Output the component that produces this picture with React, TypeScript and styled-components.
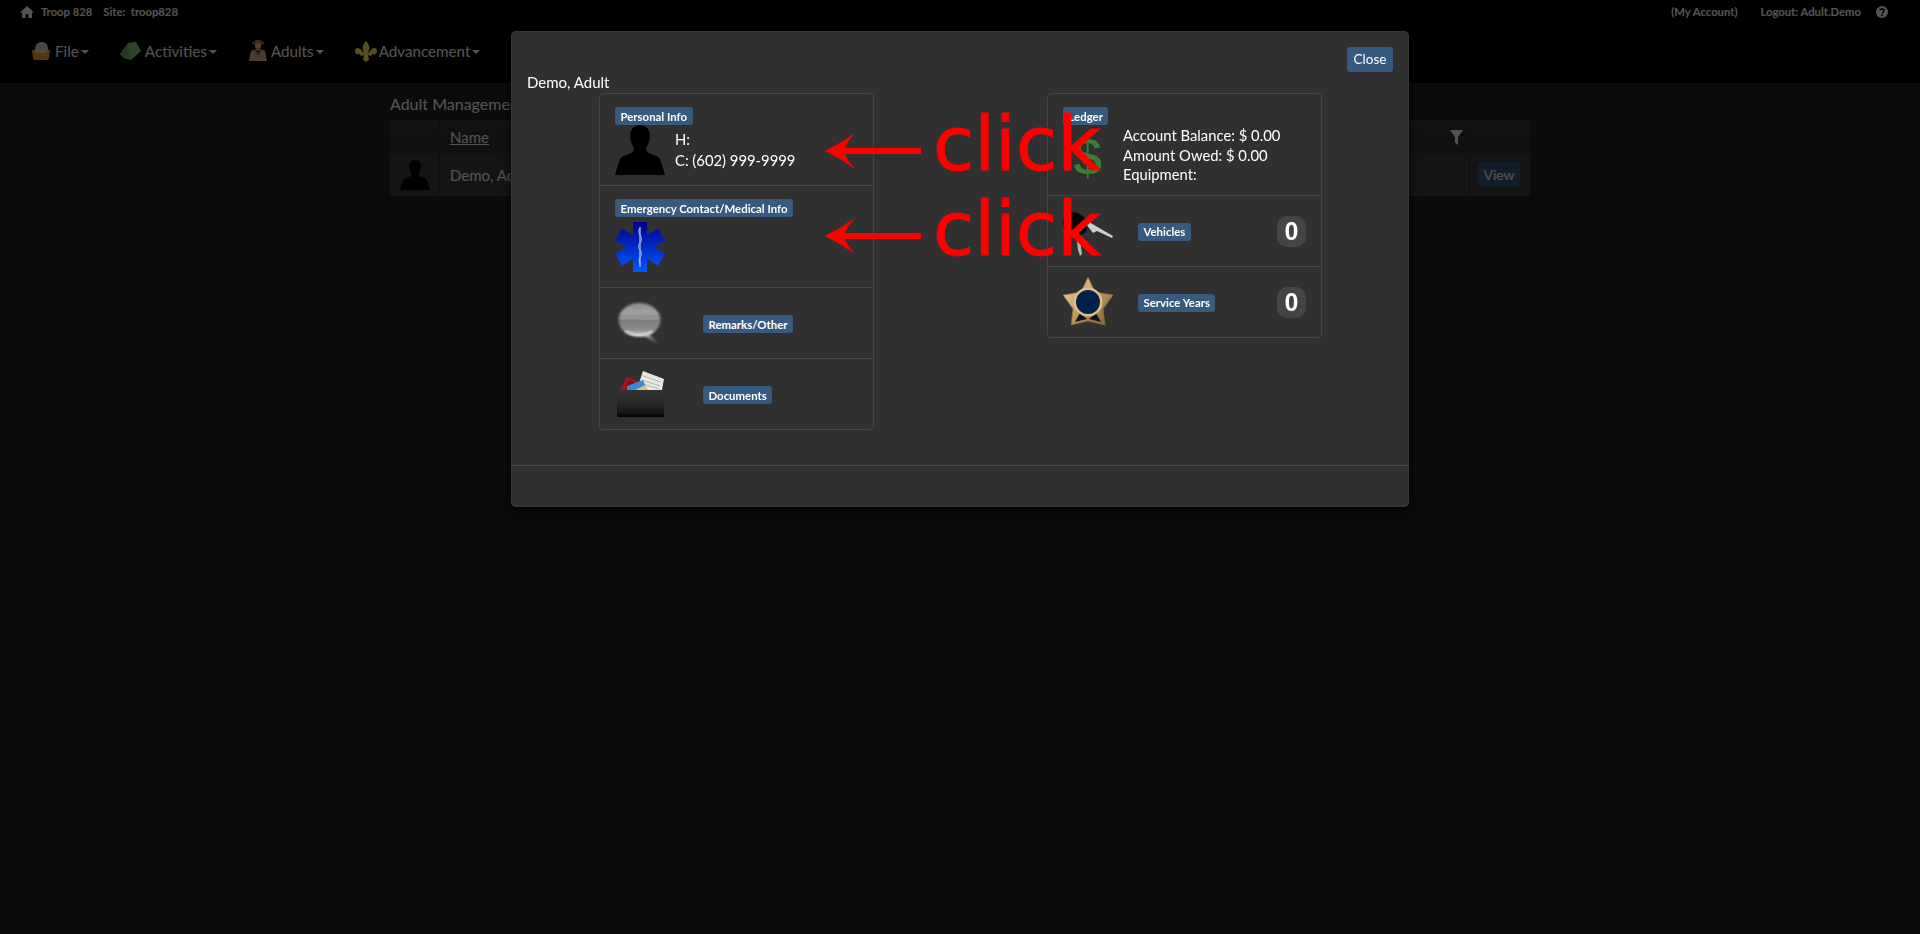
import React from "react";
import styled, { createGlobalStyle } from "styled-components";

const Global = createGlobalStyle`
  html, body { margin: 0; height: 100%; background: #222; overflow: hidden; }
  body { font-family: Lato, "Liberation Sans", sans-serif; font-size: 15px; line-height: 21px; color: #fff; }
  * { box-sizing: border-box; }
`;

const Header = styled.header`background: #000; height: 83px;`;
const TopBar = styled.div`
  height: 23px; display: flex; align-items: center; padding: 0 32px 0 20px;
  font-size: 11.25px; font-weight: 700; color: #fff;
`;
const TopText = styled.span<{ $ml?: number }>`margin-left: ${(p) => p.$ml ?? 0}px; white-space: nowrap;`;
const TopSpacer = styled.div`flex: 1;`;
const NavBar = styled.nav`display: flex; gap: 31px; padding: 16px 0 0 32px;`;
const NavItem = styled.div`display: flex; align-items: center; height: 24px; font-size: 15.2px; color: #fff;`;
const NavIcon = styled.svg<{ $mr: number }>`margin-right: ${(p) => p.$mr}px; flex: none;`;
const Caret = styled.span`
  width: 0; height: 0; margin-left: 2px; margin-top: 2px;
  border-left: 4px solid transparent; border-right: 4px solid transparent; border-top: 4px solid #fff;
`;

const Main = styled.main`width: 1140px; margin: 0 auto; padding-top: 10px;`;
const PageTitle = styled.div`font-size: 16px; line-height: 21px; margin-bottom: 6px;`;
const TableHead = styled.div`
  display: grid; grid-template-columns: 49px 1fr 61px; height: 33px;
  background: linear-gradient(#383838, #303030);
`;
const TableRow = styled.div`
  display: grid; grid-template-columns: 49px 1fr 61px; height: 43px; background: #3e3e3e;
`;
const AvatarCell = styled.div`display: flex; align-items: center; padding-left: 10px;`;
const NameCell = styled.div`
  display: flex; align-items: center; justify-content: space-between;
  padding: 2px 6px 0 10px; border-left: 1px solid #2a2a2a;
`;
const ActionCell = styled.div`display: flex; align-items: center; padding-left: 8px; border-left: 1px solid #2a2a2a;`;
const NameLink = styled.span`text-decoration: underline; font-size: 15px;`;
const ViewButton = styled.button`
  width: 42px; height: 25px; padding: 0; border: 0; border-radius: 3px; background: #375a7f;
  color: #fff; font: 14px Lato, sans-serif;
`;

const Backdrop = styled.div`position: fixed; inset: 0; background: rgba(0, 0, 0, 0.67);`;
const ModalLayer = styled.div`position: fixed; inset: 0; display: flex; justify-content: center; padding-top: 30px;`;
const Modal = styled.section`
  width: 900px; height: 478px; display: flex; flex-direction: column;
  background: #303030; background-clip: padding-box;
  border: 1px solid rgba(0, 0, 0, 0.2); border-radius: 6px;
  box-shadow: 0 5px 15px rgba(0, 0, 0, 0.5), inset 0 0 0 1px #383838;
`;
const ModalHeader = styled.div`padding: 16px 16px 0 16px; display: flex; flex-direction: column;`;
const CloseButton = styled.button`
  align-self: flex-end; width: 46px; height: 25px; padding: 0 0 1px; border: 0; border-radius: 3px;
  background: #375a7f; color: #fff; font: 13.5px Lato, sans-serif;
`;
const ModalTitle = styled.div`font-size: 15px; line-height: 21px;`;
const ModalBody = styled.div`flex: 1; display: flex; gap: 173px; padding-left: 88px; align-items: flex-start;`;
const Panel = styled.div`width: 275px; border: 1px solid #464545; border-radius: 4px;`;
const Row = styled.div<{ $pt: number; $pb: number }>`
  padding: ${(p) => p.$pt}px 15px ${(p) => p.$pb}px;
  & + & { border-top: 1px solid #464545; }
`;
const IconRow = styled.div<{ $gap: number }>`
  display: flex; align-items: center; gap: ${(p) => p.$gap}px; padding: 10px 15px;
  border-top: 1px solid #464545;
`;
const Label = styled.span`
  display: inline-flex; align-items: center; height: 18px; padding: 0 5.5px; border-radius: 3px;
  background: #375a7f; color: #fff; font-size: 11.4px; font-weight: 700; white-space: nowrap; vertical-align: top;
`;
const RowLabel = styled(Label)`margin-top: 2px;`;
const LabelLine = styled.div`height: 18px; display: flex;`;
const Split = styled.div<{ $gap: number; $mt: number }>`display: flex; gap: ${(p) => p.$gap}px; margin-top: ${(p) => p.$mt}px;`;
const Info = styled.div<{ $lh: number; $pt: number }>`
  font-size: 14.8px; line-height: ${(p) => p.$lh}px; padding-top: ${(p) => p.$pt}px;
`;
const Count = styled.span`
  margin-left: auto; margin-top: 1px; width: 29px; height: 31px; border-radius: 10px; background: #464545;
  display: flex; align-items: center; justify-content: center;
  font: 700 25px "Liberation Sans", sans-serif; color: #fff;
`;
const ModalFooter = styled.div`height: 42px; border-top: 1px solid #464545;`;

const ClickText = styled.div<{ $top: number }>`
  position: absolute; left: 933px; top: ${(p) => p.$top}px; color: #f00;
  font: 75px/75px "DejaVu Sans", sans-serif; -webkit-text-stroke: 1px #f00; pointer-events: none;
`;
const ArrowSvg = styled.svg<{ $top: number }>`position: absolute; left: 825px; top: ${(p) => p.$top}px;`;

const Icon = styled.svg`flex: none; display: block; overflow: visible;`;

const HomeIcon = () => (
  <Icon width="14" height="12" viewBox="0 0 14 12">
    <path d="M7 0 L14 6.4 H12 V12 H8.4 V8 H5.6 V12 H2 V6.4 H0 Z" fill="#fff" />
  </Icon>
);
const HelpIcon = () => (
  <Icon width="12" height="12" viewBox="0 0 12 12">
    <circle cx="6" cy="6" r="6" fill="#fff" />
    <path d="M4 4.6 C4 2.4 8.2 2.4 8.2 4.6 C8.2 6 6.2 6 6.2 7.4" fill="none" stroke="#000" strokeWidth="1.5" />
    <rect x="5.4" y="8.4" width="1.6" height="1.6" fill="#000" />
  </Icon>
);
const FunnelIcon = () => (
  <Icon width="13" height="15" viewBox="0 0 13 15">
    <path d="M0 0 H13 L8 7 V15 L5 12.5 V7 Z" fill="#fff" />
  </Icon>
);
const Silhouette = ({ size }: { size: number }) => (
  <Icon width={size} height={size} viewBox="0 0 50 50">
    <path d="M25 0 C31.5 0 35 5 35 11 C35 16 33 20 31 23 C31 26 32 27 35 28.5 C40 30.5 44 31 45.5 35 L50 50 L0 50 L4.5 35 C6 31 10 30.5 15 28.5 C18 27 19 26 19 23 C17 20 15 16 15 11 C15 5 18.5 0 25 0 Z" fill="#000" />
  </Icon>
);
const StarOfLife = () => (
  <Icon width="50" height="50" viewBox="0 0 50 50">
    <defs>
      <linearGradient id="sol" gradientUnits="userSpaceOnUse" x1="0" y1="0" x2="0" y2="50">
        <stop offset="0" stopColor="#00008c" />
        <stop offset="0.55" stopColor="#0030c8" />
        <stop offset="1" stopColor="#0058ff" />
      </linearGradient>
    </defs>
    <path d="M18 0 H32 V12.9 L43.2 6.5 L50 18.5 L39 25 L50 31.5 L43.2 43.5 L32 37.1 V50 H18 V37.1 L6.8 43.5 L0 31.5 L11 25 L0 18.5 L6.8 6.5 L18 12.9 Z" fill="url(#sol)" />
    <path d="M25 5 V45" stroke="#c8d4ee" strokeWidth="1.1" />
    <path d="M25 6 C23.2 8 23.4 11 25 13 C27 16 27 19 25 21 C23 23 23 26 25 28 C27 30 27 33 25 35 C23.6 37 24 40 25 42" fill="none" stroke="#a8bce6" strokeWidth="1" />
  </Icon>
);
const Bubble = () => (
  <Icon width="50" height="50" viewBox="0 0 50 50">
    <defs>
      <linearGradient id="bub" x1="0" y1="0" x2="0" y2="1">
        <stop offset="0" stopColor="#8c8c8c" />
        <stop offset="0.3" stopColor="#a4a4a4" />
        <stop offset="0.5" stopColor="#7c7c7c" />
        <stop offset="0.8" stopColor="#8e8e8e" />
        <stop offset="1" stopColor="#cfcfcf" />
      </linearGradient>
      <linearGradient id="tail" x1="0" y1="0" x2="1" y2="1">
        <stop offset="0" stopColor="#c8c8c8" />
        <stop offset="1" stopColor="#555" stopOpacity="0.3" />
      </linearGradient>
      <filter id="bubBlur"><feGaussianBlur stdDeviation="0.8" /></filter>
    </defs>
    <path d="M33 34 L44 47 L29 38 Z" fill="url(#tail)" filter="url(#bubBlur)" />
    <ellipse cx="24.5" cy="22" rx="21" ry="17" fill="url(#bub)" filter="url(#bubBlur)" />
    <path d="M6 21 C16 17 28 24 44 20" fill="none" stroke="#c8c8c8" strokeOpacity="0.5" strokeWidth="1.5" filter="url(#bubBlur)" />
    <path d="M10 33 C18 38 30 38 38 33" fill="none" stroke="#f2f2f2" strokeOpacity="0.8" strokeWidth="2" filter="url(#bubBlur)" />
  </Icon>
);
const Folder = () => (
  <Icon width="50" height="50" viewBox="0 0 50 50">
    <defs>
      <linearGradient id="fold" x1="0" y1="0" x2="0" y2="1">
        <stop offset="0" stopColor="#343434" />
        <stop offset="0.5" stopColor="#272727" />
        <stop offset="0.85" stopColor="#141414" />
        <stop offset="1" stopColor="#000" />
      </linearGradient>
    </defs>
    <polygon points="28,2 49,10 47,21 24,21 24,14" fill="#e8e8e2" />
    <path d="M28 7 L46 13 M27 11 L45 17 M28 15 L44 20" stroke="#a6a6a0" strokeWidth="0.8" />
    <polygon points="12,8 25,13 24,21 5,21" fill="#b01018" />
    <polygon points="13,11 22,14 21,21 10,21" fill="#7a1018" />
    <polygon points="24,16 30,16 33,21 20,21" fill="#d8c088" />
    <polygon points="12,17 28,11 30,16 20,21 12,21" fill="#3a88d8" />
    <rect x="2" y="21" width="47" height="27" rx="1.5" fill="url(#fold)" />
  </Icon>
);
const Dollar = () => (
  <Icon width="50" height="50" viewBox="0 0 50 50">
    <text x="24.5" y="50" textAnchor="middle" fontFamily="Liberation Sans" fontWeight="700" fontSize="54" fill="#3f7a38" stroke="#22391e" strokeWidth="1">$</text>
  </Icon>
);
const Keys = () => (
  <Icon width="50" height="50" viewBox="0 0 50 50">
    <polygon points="23,18 26,16 50,30 49,32 34,25 30,27" fill="#c8d0cc" />
    <polygon points="13,28 16,27 19,48 17,50 15,44" fill="#b0b8b4" />
    <ellipse cx="12" cy="18" rx="13" ry="11" transform="rotate(40 12 18)" fill="#050505" />
    <ellipse cx="6" cy="13" rx="2" ry="4" transform="rotate(20 6 13)" fill="#444" />
  </Icon>
);
const BadgeStar = () => (
  <Icon width="50" height="50" viewBox="0 0 50 50">
    <defs>
      <linearGradient id="gold" x1="0" y1="0" x2="1" y2="1">
        <stop offset="0" stopColor="#f0d8a8" />
        <stop offset="0.5" stopColor="#c49a60" />
        <stop offset="1" stopColor="#7a5a30" />
      </linearGradient>
    </defs>
    <polygon points="25,0 32,15 50,18 40,32 42,48 25,44 8,48 10,32 0,18 18,15" fill="url(#gold)" stroke="#8a6a3a" strokeWidth="0.8" strokeLinejoin="round" />
    <polygon points="12,45 17,36 24,42" fill="#14141c" />
    <polygon points="38,45 33,36 26,42" fill="#14141c" />
    <circle cx="25" cy="25" r="14.5" fill="#e0bf88" />
    <circle cx="25" cy="25" r="12" fill="#02204e" />
  </Icon>
);

const FileNavIcon = () => (
  <NavIcon $mr={5} width="18" height="18" viewBox="0 0 18 18">
    <path d="M3 8 C3 2 6 0 10 0 C14 0 16 3 16 8 Z" fill="#d8d8e0" />
    <path d="M0 8 H18 L17 16 Q17 18 15 18 H3 Q1 18 1 16 Z" fill="#ffa82c" />
    <path d="M3 7 H15 V11 H3 Z" fill="#ffe0a0" />
  </NavIcon>
);
const TentNavIcon = () => (
  <NavIcon $mr={4} width="21" height="18" viewBox="0 0 21 18">
    <path d="M0 12 L8 1 L16 0 L21 9 L11 18 L4 16 Z" fill="#86d078" />
    <path d="M8 1 L11 18 L4 16 L0 12 Z" fill="#6cb460" />
  </NavIcon>
);
const ScoutNavIcon = () => (
  <NavIcon $mr={3} width="20" height="22" viewBox="0 0 20 22">
    <ellipse cx="10" cy="3" rx="6" ry="2" fill="#a08050" />
    <rect x="7" y="0" width="6" height="3" fill="#a08050" />
    <circle cx="10" cy="6" r="3" fill="#f0c090" />
    <path d="M1 21 L3 11 L8 9 H12 L17 11 L19 21 Z" fill="#e8b890" />
    <path d="M6 10 H14 L13 17 H7 Z" fill="#c8a070" />
    <path d="M7 10 L10 15 L13 10 Z" fill="#8a2a20" />
  </NavIcon>
);
const FleurNavIcon = () => (
  <NavIcon $mr={2} width="22" height="21" viewBox="0 0 22 21">
    <path d="M11 0 C14.5 4 15.5 7 12.8 12 H9.2 C6.5 7 7.5 4 11 0 Z" fill="#ffee55" />
    <path d="M8.5 12.5 C5 5 0 6 0 10 C0 13 3 14.5 4.5 12.5 C5 15 7 15.5 8.5 14 Z" fill="#ffee55" />
    <path d="M13.5 12.5 C17 5 22 6 22 10 C22 13 19 14.5 17.5 12.5 C17 15 15 15.5 13.5 14 Z" fill="#ffee55" />
    <rect x="6" y="11.5" width="10" height="2.5" fill="#ffee55" />
    <path d="M9 14 H13 L14 19 L11 21 L8 19 Z" fill="#ffee55" />
  </NavIcon>
);
const Arrow = ({ top }: { top: number }) => (
  <ArrowSvg $top={top} width="96" height="36" viewBox="0 0 96 36">
    <path d="M0 18 Q16 10 30 0 Q22 9 20 15 H96 V21 H20 Q22 27 30 36 Q16 26 0 18 Z" fill="#f00" />
  </ArrowSvg>
);

export default function App() {
  return (
    <>
      <Global />
      <Header>
        <TopBar>
          <HomeIcon />
          <TopText $ml={7}>Troop 828</TopText>
          <TopText $ml={11}>Site:&nbsp; troop828</TopText>
          <TopSpacer />
          <TopText>(My Account)</TopText>
          <TopText $ml={23}>Logout: Adult.Demo</TopText>
          <TopText $ml={15}><HelpIcon /></TopText>
        </TopBar>
        <NavBar>
          <NavItem><FileNavIcon />File<Caret /></NavItem>
          <NavItem><TentNavIcon />Activities<Caret /></NavItem>
          <NavItem><ScoutNavIcon />Adults<Caret /></NavItem>
          <NavItem><FleurNavIcon />Advancement<Caret /></NavItem>
        </NavBar>
      </Header>
      <Main>
        <PageTitle>Adult Management</PageTitle>
        <TableHead>
          <AvatarCell />
          <NameCell><NameLink>Name</NameLink><FunnelIcon /></NameCell>
          <ActionCell />
        </TableHead>
        <TableRow>
          <AvatarCell><Silhouette size={30} /></AvatarCell>
          <NameCell>Demo, Adult</NameCell>
          <ActionCell><ViewButton>View</ViewButton></ActionCell>
        </TableRow>
      </Main>
      <Backdrop />
      <ModalLayer>
        <Modal>
          <ModalHeader>
            <CloseButton>Close</CloseButton>
            <ModalTitle>Demo, Adult</ModalTitle>
          </ModalHeader>
          <ModalBody>
            <Panel>
              <Row $pt={13} $pb={10}>
                <LabelLine><Label>Personal Info</Label></LabelLine>
                <Split $gap={10} $mt={0}>
                  <Silhouette size={50} />
                  <Info $lh={21} $pt={4}>
                    <div>H:</div>
                    <div>C: (602) 999-9999</div>
                  </Info>
                </Split>
              </Row>
              <Row $pt={13} $pb={15}>
                <LabelLine><Label>Emergency Contact/Medical Info</Label></LabelLine>
                <Split $gap={10} $mt={5}><StarOfLife /></Split>
              </Row>
              <IconRow $gap={38}><Bubble /><RowLabel>Remarks/Other</RowLabel></IconRow>
              <IconRow $gap={38}><Folder /><RowLabel>Documents</RowLabel></IconRow>
            </Panel>
            <Panel>
              <Row $pt={13} $pb={10}>
                <LabelLine><Label>Ledger</Label></LabelLine>
                <Split $gap={10} $mt={0}>
                  <Dollar />
                  <Info $lh={19.5} $pt={1}>
                    <div>Account Balance: $ 0.00</div>
                    <div>Amount Owed: $ 0.00</div>
                    <div>Equipment:</div>
                  </Info>
                </Split>
              </Row>
              <IconRow $gap={25}><Keys /><RowLabel>Vehicles</RowLabel><Count>0</Count></IconRow>
              <IconRow $gap={25}><BadgeStar /><RowLabel>Service Years</RowLabel><Count>0</Count></IconRow>
            </Panel>
          </ModalBody>
          <ModalFooter />
        </Modal>
      </ModalLayer>
      <Arrow top={133} />
      <Arrow top={218} />
      <ClickText $top={107}>click</ClickText>
      <ClickText $top={192}>click</ClickText>
    </>
  );
}
